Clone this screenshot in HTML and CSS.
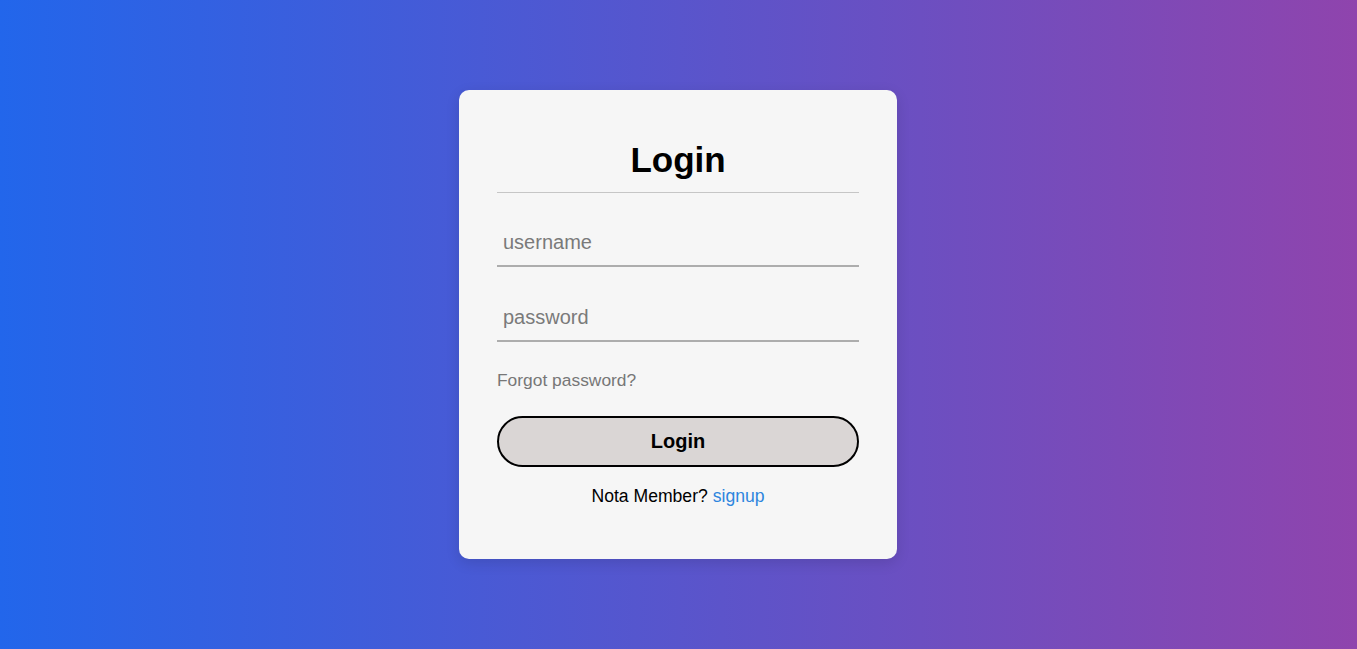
FILE: index.html
```html
<!doctype html>
<html lang="en">

<head>
    <meta charset="UTF-8" />
    <meta name="viewport" content="width=device-width, initial-scale=1.0" />
    <title>Login</title>
    <link rel="stylesheet" href="styles.css">
</head>

<body>
    <div class="card">
        <h1>Login</h1>
        <form class="login-form" onsubmit="return false">
            <input type="text" class="field" placeholder="username" />
            <input type="password" class="field" placeholder="password" />
            <a href="#" class="forgot">Forgot password?</a>
            <button type="submit">Login</button>
            <p class="signup">Nota Member? <a href="#">signup</a></p>
        </form>
    </div>
</body>

</html>
```

FILE: styles.css
```css
* {
    box-sizing: border-box;
}

body {
    margin: 0;
    height: 100vh;
    font-family: "Liberation Sans", Arial, sans-serif;
    background: linear-gradient(to right, #2266eb, #8f44ad);
    display: flex;
    align-items: center;
    justify-content: center;
}

.card {
    width: 438px;
    margin-right: 1px;
    background: #f6f6f6;
    border-radius: 10px;
    padding: 50px 38px 52px;
    box-shadow: 0 4px 14px rgba(0, 0, 0, 0.12);
}

h1 {
    margin: 0;
    padding-bottom: 12px;
    font-size: 35px;
    text-align: center;
    color: #000;
    border-bottom: 1px solid #c6c6c6;
}

.login-form {
    display: flex;
    flex-direction: column;
}

.field {
    margin-top: 31px;
    padding: 7px 6px 11px;
    font-family: inherit;
    font-size: 20px;
    line-height: 23px;
    border: none;
    border-bottom: 2px solid #adadad;
    background: transparent;
    outline: none;
}

.field + .field {
    margin-top: 32px;
}

.field::placeholder {
    color: #7a7a7a;
}

.forgot {
    margin-top: 28px;
    font-size: 17.4px;
    color: #777;
    text-decoration: none;
    align-self: flex-start;
}

button {
    margin-top: 25px;
    height: 51px;
    border: 2px solid #000;
    border-radius: 26px;
    background: #dad6d5;
    font-family: inherit;
    font-size: 20px;
    font-weight: bold;
    color: #000;
    cursor: pointer;
}

.signup {
    margin: 19px 0 0;
    font-size: 17.6px;
    text-align: center;
    color: #000;
}

.signup a {
    color: #2d85de;
    text-decoration: none;
}
```
